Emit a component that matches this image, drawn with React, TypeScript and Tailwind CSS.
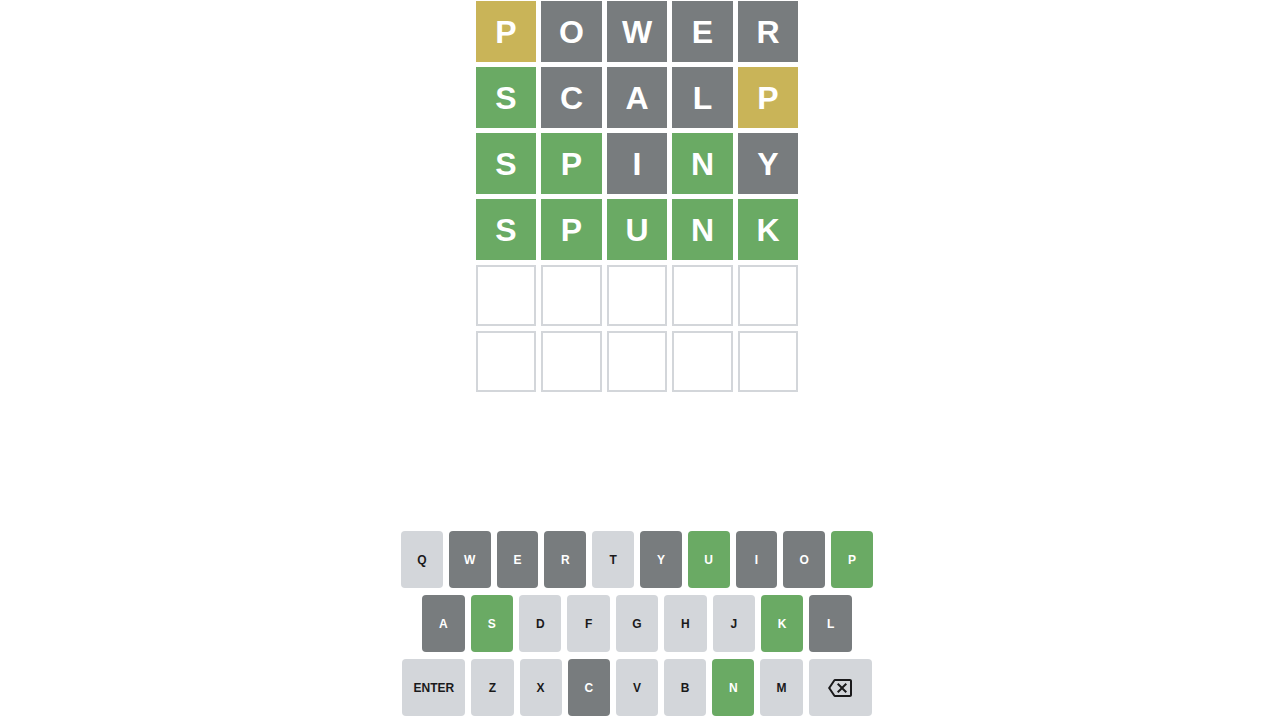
type State = "correct" | "present" | "absent" | "empty";

const tileBg: Record<State, string> = {
  correct: "bg-[#6aaa64] text-white",
  present: "bg-[#c9b458] text-white",
  absent: "bg-[#787c7e] text-white",
  empty: "border-2 border-[#d3d6da] bg-white",
};

const guesses: [string, string][] = [
  ["POWER", "paaaa"],
  ["SCALP", "caaap"],
  ["SPINY", "ccaca"],
  ["SPUNK", "ccccc"],
];

const code: Record<string, State> = { c: "correct", p: "present", a: "absent" };

const keyState: Record<string, State> = {
  W: "absent", E: "absent", R: "absent", Y: "absent", I: "absent", O: "absent",
  A: "absent", L: "absent", C: "absent",
  U: "correct", P: "correct", S: "correct", K: "correct", N: "correct",
};

function keyClass(k: string) {
  const s = keyState[k];
  if (s === "correct") return "bg-[#6aaa64] text-white";
  if (s === "absent") return "bg-[#787c7e] text-white";
  return "bg-[#d3d6da] text-[#1a1a1b]";
}

function Tile({ letter, state }: { letter?: string; state: State }) {
  return (
    <div
      className={`flex h-[61px] w-[60.5px] items-center justify-center text-[32px] font-bold leading-none ${tileBg[state]}`}
    >
      {letter}
    </div>
  );
}

function Key({ label, w }: { label: string; w: string }) {
  return (
    <div
      className={`flex h-[57px] items-center justify-center rounded-[4px] text-[12px] font-bold ${w} ${keyClass(label)}`}
    >
      {label}
    </div>
  );
}

function Backspace() {
  return (
    <div className="flex h-[57px] w-[63px] items-center justify-center rounded-[4px] bg-[#d3d6da] text-[#1a1a1b]">
      <svg viewBox="0 0 24 24" className="h-6 w-6" fill="currentColor">
        <path d="M22 3H7c-.69 0-1.23.35-1.59.88L0 12l5.41 8.11c.36.53.9.89 1.59.89h15c1.1 0 2-.9 2-2V5c0-1.1-.9-2-2-2zm0 16H7.07L2.4 12l4.66-7H22v14zm-11.59-2L14 13.41 17.59 17 19 15.59 15.41 12 19 8.41 17.59 7 14 10.59 10.41 7 9 8.41 12.59 12 9 15.59z" />
      </svg>
    </div>
  );
}

export default function App() {
  const rows = [...guesses.map(([w, s]) => w.split("").map((l, i) => ({ l, s: code[s[i]] }))),
    ...Array.from({ length: 2 }, () => Array.from({ length: 5 }, () => ({ l: "", s: "empty" as State })))];

  return (
    <div className="h-[720px] w-[1274px] bg-white" style={{ fontFamily: '"Liberation Sans", Arial, sans-serif' }}>
      <div className="flex h-full flex-col items-center justify-between pb-[4px] pt-[1px]">
        <div className="flex flex-col gap-[5px]">
          {rows.map((row, r) => (
            <div key={r} className="flex gap-[5px]">
              {row.map((t, i) => (
                <Tile key={i} letter={t.l} state={t.s} />
              ))}
            </div>
          ))}
        </div>

        <div className="flex flex-col items-center gap-[7px]">
          <div className="flex gap-[6px]">
            {"QWERTYUIOP".split("").map((k) => (
              <Key key={k} label={k} w="w-[41.8px]" />
            ))}
          </div>
          <div className="flex gap-[6px]">
            {"ASDFGHJKL".split("").map((k) => (
              <Key key={k} label={k} w="w-[42.4px]" />
            ))}
          </div>
          <div className="flex gap-[6px]">
            <Key label="ENTER" w="w-[63px]" />
            {"ZXCVBNM".split("").map((k) => (
              <Key key={k} label={k} w="w-[42.2px]" />
            ))}
            <Backspace />
          </div>
        </div>
      </div>
    </div>
  );
}
